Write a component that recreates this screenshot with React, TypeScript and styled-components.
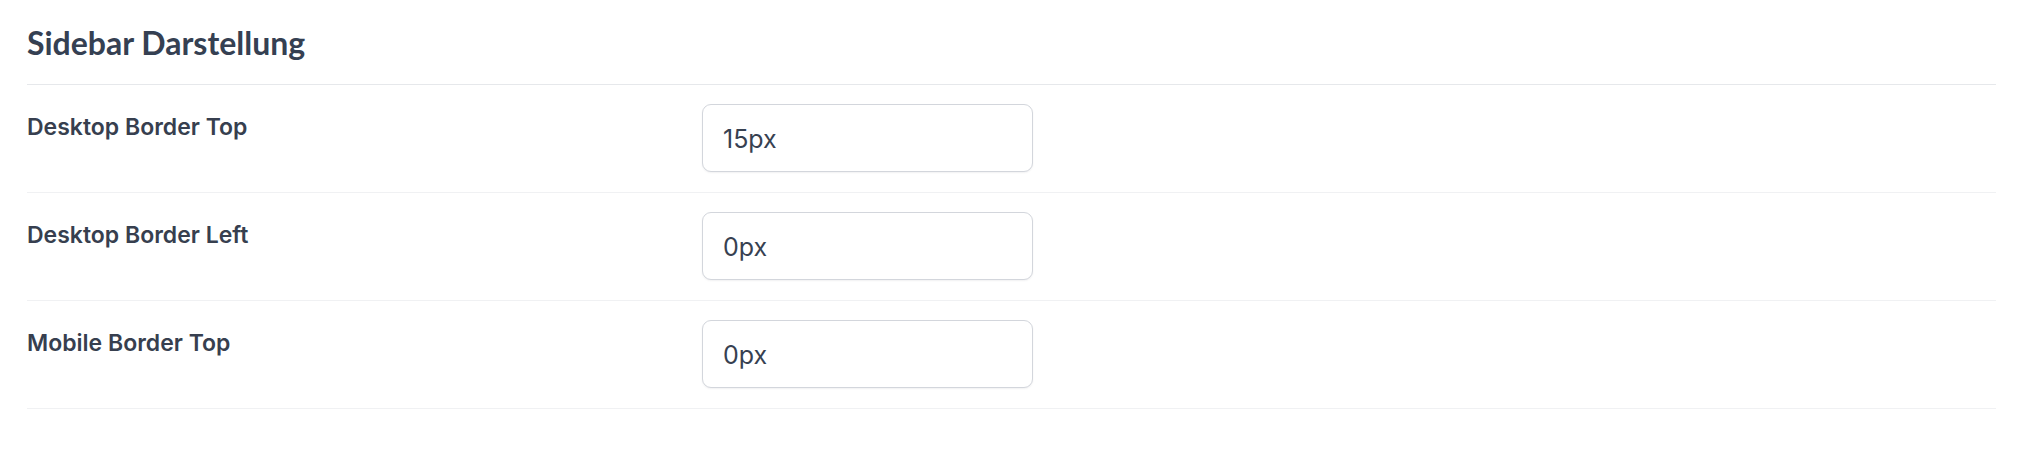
import React from 'react';
import styled, { createGlobalStyle } from 'styled-components';

const GlobalStyle = createGlobalStyle`
  html, body {
    margin: 0;
    padding: 0;
    background: #ffffff;
  }
  body {
    font-family: Inter, "Liberation Sans", sans-serif;
  }
`;

const Panel = styled.section`
  padding: 22px 22px 0 27px;
  background: #ffffff;
`;

const Heading = styled.h2`
  margin: 0;
  padding-bottom: 20px;
  font-family: Lato, "Liberation Sans", sans-serif;
  font-weight: 700;
  font-size: 32px;
  line-height: 42px;
  color: #354052;
  border-bottom: 1px solid #e6e8eb;
`;

const Row = styled.div`
  display: grid;
  grid-template-columns: 675px 331px;
  align-items: start;
  padding: 19px 0 20px;
  border-bottom: 1px solid #f0f1f3;
`;

const Label = styled.label`
  padding-top: 9px;
  font-size: 23px;
  font-weight: 600;
  color: #373f4f;
`;

const Field = styled.input`
  box-sizing: border-box;
  width: 331px;
  height: 68px;
  padding: 1px 20px 0;
  border: 1px solid #d3d6dc;
  border-radius: 9px;
  box-shadow: 0 1px 2px rgba(16, 24, 40, 0.06);
  font-family: Inter, "Liberation Sans", sans-serif;
  font-size: 25px;
  color: #374151;
  background: #ffffff;
  outline: none;
`;

const rows = [
  { label: 'Desktop Border Top', value: '15px' },
  { label: 'Desktop Border Left', value: '0px' },
  { label: 'Mobile Border Top', value: '0px' },
];

export default function App() {
  return (
    <>
      <GlobalStyle />
      <Panel>
        <Heading>Sidebar Darstellung</Heading>
        {rows.map((r) => (
          <Row key={r.label}>
            <Label>{r.label}</Label>
            <Field defaultValue={r.value} />
          </Row>
        ))}
      </Panel>
    </>
  );
}
